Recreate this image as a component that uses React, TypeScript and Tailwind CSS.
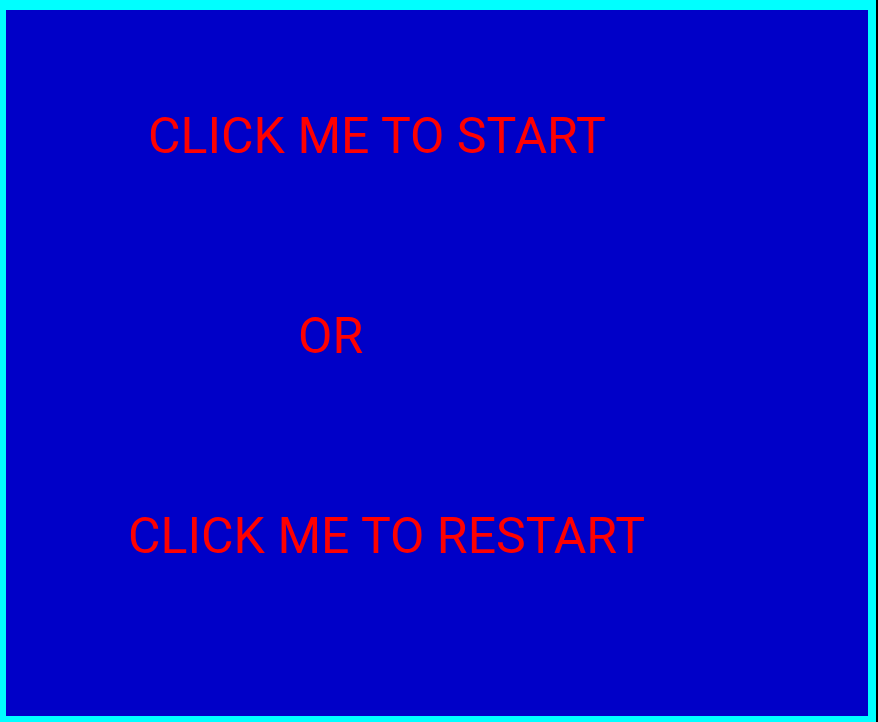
export default function App() {
  return (
    <div className="min-h-screen w-full bg-black">
      <div
        className="flex h-[722px] w-[876px] flex-col border-b-[6px] border-l-[6px] border-r-[8px] border-t-[10px] border-[#00ffff] bg-[#0000c8] pt-[101px] text-[50px] leading-none text-[#ff0000]"
        style={{ fontFamily: 'Roboto, "Liberation Sans", sans-serif' }}
      >
        <button className="ml-[142px] w-fit cursor-pointer">CLICK ME TO START</button>
        <div className="ml-[292px] mt-[150px] w-fit">OR</div>
        <button className="ml-[122px] mt-[150px] w-fit cursor-pointer">CLICK ME TO RESTART</button>
      </div>
    </div>
  )
}
